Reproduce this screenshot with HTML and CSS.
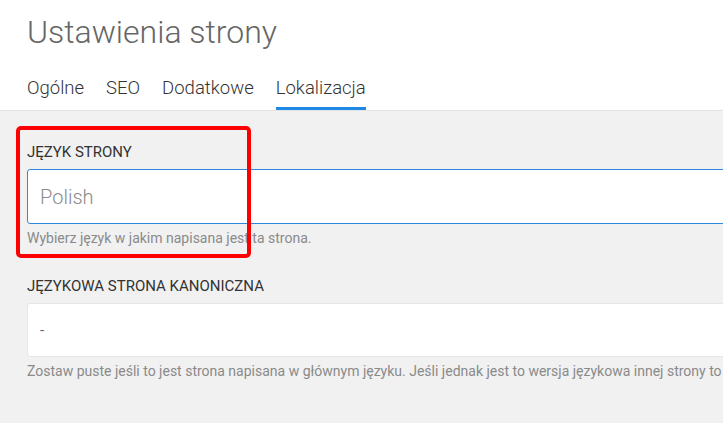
FILE: index.html
```html
<!DOCTYPE html>
<html lang="pl">
<head>
<meta charset="utf-8">
<title>Ustawienia strony</title>
<link rel="stylesheet" href="styles.css">
</head>
<body>
<header class="header">
  <h1 class="title">Ustawienia strony</h1>
  <nav class="tabs">
    <span class="tab">Ogólne</span>
    <span class="tab">SEO</span>
    <span class="tab">Dodatkowe</span>
    <span class="tab tab-active">Lokalizacja</span>
  </nav>
</header>
<main class="content">
  <section class="field">
    <label class="label">JĘZYK STRONY</label>
    <div class="input input-focus">Polish</div>
    <p class="help">Wybierz język w jakim napisana jest ta strona.</p>
  </section>
  <section class="field field-second">
    <label class="label">JĘZYKOWA STRONA KANONICZNA</label>
    <div class="input input-plain">-</div>
    <p class="help">Zostaw puste jeśli to jest strona napisana w głównym języku. Jeśli jednak jest to wersja językowa innej strony to</p>
  </section>
  <div class="highlight"></div>
</main>
</body>
</html>
```

FILE: styles.css
```css
html, body {
  margin: 0;
  padding: 0;
}
body {
  font-family: Roboto, "Liberation Sans", sans-serif;
  background: #f1f1f1;
  overflow: hidden;
  width: 723px;
  height: 423px;
}
.header {
  background: #ffffff;
  border-bottom: 1px solid #e3e3e3;
  padding: 13px 27px 0;
  height: 97px;
}
.title {
  margin: 0;
  font-size: 32px;
  line-height: 38px;
  font-weight: 300;
  color: #666666;
}
.tabs {
  display: flex;
  gap: 22px;
  margin-top: 25px;
}
.tab {
  font-size: 18.5px;
  line-height: 24px;
  font-weight: 300;
  color: #333333;
  padding-bottom: 7px;
  border-bottom: 3px solid transparent;
}
.tab-active {
  border-bottom-color: #1e88e5;
}
.content {
  position: relative;
  padding: 32px 0 0 27px;
  width: 900px;
}
.field {
  display: flex;
  flex-direction: column;
}
.field-second {
  margin-top: 30px;
}
.label {
  font-size: 15px;
  line-height: 18px;
  color: #333333;
}
.input {
  box-sizing: border-box;
  height: 55px;
  margin-top: 8px;
  display: flex;
  align-items: center;
  padding: 0 12px;
  background: #ffffff;
  border-radius: 3px;
}
.input-focus {
  border: 1px solid #2f86de;
  font-size: 20px;
  font-weight: 300;
  color: #8a8a8a;
}
.input-plain {
  border: 1px solid #e6e6e6;
  font-size: 15px;
  color: #666666;
  height: 54px;
}
.help {
  margin: 6px 0 0;
  font-size: 14px;
  line-height: 17px;
  color: #8a8a8a;
  white-space: nowrap;
}
.highlight {
  position: absolute;
  left: 16px;
  top: 15px;
  width: 227px;
  height: 124px;
  border: 4px solid #ff0000;
  border-radius: 5px;
}
```
